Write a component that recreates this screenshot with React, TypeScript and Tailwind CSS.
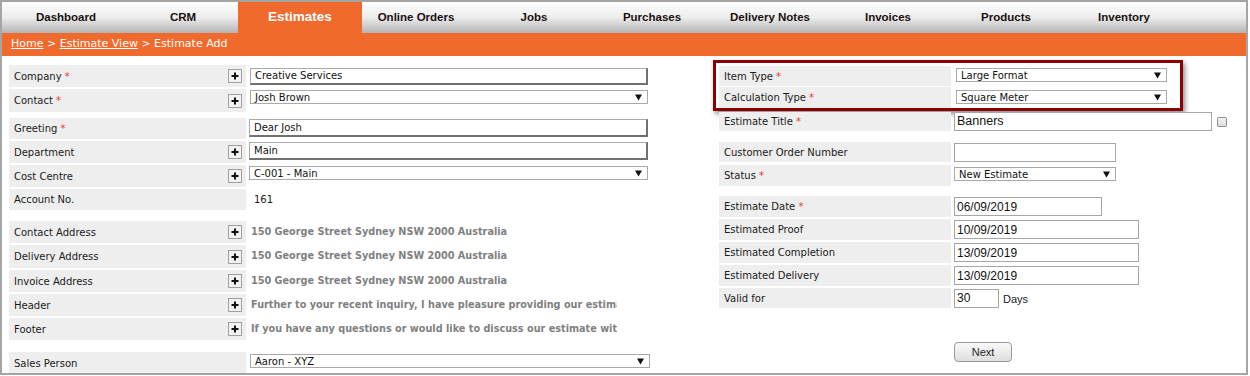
import React from "react";

const tabs = ["Dashboard", "CRM", "Estimates", "Online Orders", "Jobs", "Purchases", "Delivery Notes", "Invoices", "Products", "Inventory"];

const Req = () => <span className="text-[#ee3333]"> *</span>;

const Plus = () => (
  <span className="w-[14px] h-[14px] border border-[#a0a0a0] bg-[#f2f2f2] flex items-center justify-center">
    <svg width="8" height="8" viewBox="0 0 8 8">
      <path d="M4 0.5v7M0.5 4h7" stroke="#111" strokeWidth="2" />
    </svg>
  </span>
);

const Arrow = () => (
  <svg width="7" height="7" viewBox="0 0 7 7" className="shrink-0">
    <path d="M0 0.5h7L3.5 6.5z" fill="#111" />
  </svg>
);

const Select = ({ value, className }: { value: string; className: string }) => (
  <div className={`bg-white border border-[#a9a9a9] flex items-center justify-between pl-[4px] pr-[5px] text-[10px] text-[#111] ${className}`}>
    <span>{value}</span>
    <Arrow />
  </div>
);

const TextBox = ({ value, className }: { value: string; className: string }) => (
  <div className={`bg-white border border-[#a9a9a9] border-r-2 border-b-2 border-r-[#707070] border-b-[#707070] flex items-center pl-[4px] text-[10px] text-[#111] ${className}`}>
    {value}
  </div>
);

const ArialBox = ({ value, className }: { value: string; className: string }) => (
  <div className={`bg-white border border-[#a6a6a6] flex items-center pl-[2px] text-[12px] text-[#111] font-['Liberation_Sans',Arial,sans-serif] ${className}`}>
    {value}
  </div>
);

type LProps = { label: string; req?: boolean; plus?: boolean; className: string; top?: boolean; children?: React.ReactNode };

const LRow = ({ label, req, plus, className, top, children }: LProps) => (
  <div className={`flex ${className}`}>
    <div className="w-[237px] bg-[#eeeeee] flex items-center justify-between pl-[5px] pr-[4px]">
      <span>
        {label}
        {req && <Req />}
      </span>
      {plus && <Plus />}
    </div>
    <div className={`ml-[4px] flex-1 flex ${top ? "items-start" : "items-center"}`}>{children}</div>
  </div>
);

// long texts are clipped by the cell, as in the original page
const Addr = ({ text }: { text: string }) => (
  <div className="w-[367px] overflow-hidden whitespace-nowrap font-bold text-[9.7px] text-[#808080] pl-[1px]">{text}</div>
);

type RProps = { label: string; req?: boolean; className: string; top?: boolean; children?: React.ReactNode };

const RRow = ({ label, req, className, top, children }: RProps) => (
  <div className={`flex ${className}`}>
    <div className="w-[232px] bg-[#eeeeee] flex items-center pl-[5px]">
      <span>
        {label}
        {req && <Req />}
      </span>
    </div>
    <div className={`ml-[3px] flex-1 flex ${top ? "items-start" : "items-center"}`}>{children}</div>
  </div>
);

export default function App() {
  return (
    <div className="w-[1250px] h-[376px] bg-white">
      <div className="w-[1248px] h-[375px] border-2 border-[#a5a5a5] overflow-hidden font-['DejaVu_Sans',Verdana,sans-serif] text-[10px] text-[#1a1a1a]">
        {/* nav */}
        <div className="h-[31px] flex pl-[5px] bg-gradient-to-b from-[#fefefe] via-[#ececec] to-[#b4b4b4] font-['Liberation_Sans',Arial,sans-serif] font-bold text-[11.5px] text-[#1a1010]">
          {tabs.map((t, i) => {
            if (t === "Estimates")
              return (
                <div key={t} className="w-[124px] bg-[#f06a2e] flex items-center justify-center text-white text-[13.5px]">
                  {t}
                </div>
              );
            const w = i === 0 ? "w-[118px]" : i === 1 ? "w-[113px] pl-[3px]" : i === 3 ? "w-[113px] pr-[5px]" : "w-[118px]";
            return (
              <div key={t} className={`${w} flex items-center justify-center`}>
                {t}
              </div>
            );
          })}
        </div>
        {/* breadcrumb */}
        <div className="h-[23px] bg-[#f06a2e] flex items-center pl-[9px] text-white text-[11px]">
          <span className="underline">Home</span>
          <span>&nbsp;&gt;&nbsp;</span>
          <span className="underline">Estimate View</span>
          <span>&nbsp;&gt; Estimate Add</span>
        </div>
        {/* form */}
        <div className="flex pl-[7px]">
          <div className="w-[641px] pt-[9px]">
            <LRow label="Company" req plus className="h-[22px]">
              <TextBox value="Creative Services" className="w-[398px] h-[17px]" />
            </LRow>
            <LRow label="Contact" req plus top className="h-[23px] mt-[2px]">
              <Select value="Josh Brown" className="w-[398px] h-[14px] mt-[1px]" />
            </LRow>
            <LRow label="Greeting" req top className="h-[21px] mt-[6px]">
              <TextBox value="Dear Josh" className="w-[399px] h-[18px] mt-[1px] -ml-[1px]" />
            </LRow>
            <LRow label="Department" plus top className="h-[22px] mt-[2px]">
              <TextBox value="Main" className="w-[399px] h-[18px] mt-[1px] -ml-[1px]" />
            </LRow>
            <LRow label="Cost Centre" plus top className="h-[22px] mt-[2px]">
              <Select value="C-001 - Main" className="w-[399px] h-[14px] mt-[1px] -ml-[1px]" />
            </LRow>
            <LRow label="Account No." className="h-[21px] mt-[2px]">
              <span className="pl-[4px]">161</span>
            </LRow>
            <LRow label="Contact Address" plus className="h-[22px] mt-[11px]">
              <Addr text="150 George Street Sydney NSW 2000 Australia" />
            </LRow>
            <LRow label="Delivery Address" plus className="h-[23px] mt-[2px]">
              <Addr text="150 George Street Sydney NSW 2000 Australia" />
            </LRow>
            <LRow label="Invoice Address" plus className="h-[22px] mt-[2px]">
              <Addr text="150 George Street Sydney NSW 2000 Australia" />
            </LRow>
            <LRow label="Header" plus className="h-[22px] mt-[2px]">
              <Addr text="Further to your recent inquiry, I have pleasure providing our estimate for the following." />
            </LRow>
            <LRow label="Footer" plus className="h-[22px] mt-[2px]">
              <Addr text="If you have any questions or would like to discuss our estimate with us, please call." />
            </LRow>
            <LRow label="Sales Person" top className="h-[22px] mt-[12px]">
              <Select value="Aaron - XYZ" className="w-[400px] h-[14px] mt-[2px]" />
            </LRow>
          </div>

          <div className="ml-[63px] pt-[4px]">
            <div className="w-[470px] border-[3px] border-[#8b0000] pl-[3px] pt-[3px] shadow-[2px_3px_5px_rgba(0,0,0,0.45)]">
              <RRow label="Item Type" req top className="h-[20px]">
                <Select value="Large Format" className="w-[211px] h-[14px] mt-[2px] ml-[2px]" />
              </RRow>
              <RRow label="Calculation Type" req top className="h-[21px] mt-[1px]">
                <Select value="Square Meter" className="w-[211px] h-[14px] mt-[3px] ml-[2px]" />
              </RRow>
            </div>
            <div className="ml-[6px]">
              <RRow label="Estimate Title" req className="h-[19px] mt-[1px]">
                <div className="w-[258px] h-[19px] bg-white border border-[#a6a6a6] flex items-center pl-[2px] text-[12.5px] text-[#111] font-['Liberation_Sans',Arial,sans-serif]">
                  Banners
                </div>
                <div className="ml-[5px] w-[10px] h-[10px] rounded-[2px] border border-[#8f8f8f] bg-gradient-to-b from-[#f4f4f4] to-[#dcdcdc]" />
              </RRow>
              <RRow label="Customer Order Number" className="h-[20px] mt-[11px]">
                <ArialBox value="" className="w-[162px] h-[19px]" />
              </RRow>
              <RRow label="Status" req top className="h-[21px] mt-[3px]">
                <Select value="New Estimate" className="w-[162px] h-[14px] mt-[2px]" />
              </RRow>
              <RRow label="Estimate Date" req className="h-[21px] mt-[10px]">
                <ArialBox value="06/09/2019" className="w-[148px] h-[19px]" />
              </RRow>
              <RRow label="Estimated Proof" className="h-[21px] mt-[2px]">
                <ArialBox value="10/09/2019" className="w-[185px] h-[19px]" />
              </RRow>
              <RRow label="Estimated Completion" className="h-[21px] mt-[2px]">
                <ArialBox value="13/09/2019" className="w-[185px] h-[19px]" />
              </RRow>
              <RRow label="Estimated Delivery" className="h-[21px] mt-[2px]">
                <ArialBox value="13/09/2019" className="w-[185px] h-[19px]" />
              </RRow>
              <RRow label="Valid for" className="h-[20px] mt-[2px]">
                <ArialBox value="30" className="w-[45px] h-[19px]" />
                <span className="ml-[4px] mt-[3px] text-[11px] font-['Liberation_Sans',Arial,sans-serif]">Days</span>
              </RRow>
              <div className="ml-[235px] mt-[34px] w-[58px] h-[20px] rounded-[4px] border border-[#9a9a9a] bg-gradient-to-b from-[#fafafa] to-[#dedede] flex items-center justify-center text-[11px] font-['Liberation_Sans',Arial,sans-serif] text-[#222]">
                Next
              </div>
            </div>
          </div>
        </div>
      </div>
    </div>
  );
}
